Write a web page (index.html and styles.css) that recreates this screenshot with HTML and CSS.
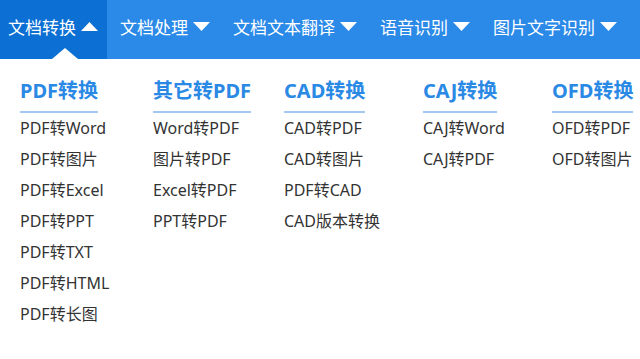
FILE: index.html
```html
<!DOCTYPE html>
<html lang="zh-CN">
<head>
    <meta charset="UTF-8">
    <meta name="viewport" content="width=device-width, initial-scale=1.0">
    <title>文档转换</title>
    <link rel="stylesheet" href="styles.css">
</head>
<body>
    <div class="nav">
        <div class="nav-item active">文档转换
            <svg class="caret" width="17" height="9" viewBox="0 0 17 9"><path d="M0 9 L8.5 0 L17 9 Z" fill="#fff"/></svg>
            <span class="pointer"></span>
        </div>
        <div class="nav-item">文档处理
            <svg class="caret" width="17" height="9" viewBox="0 0 17 9"><path d="M0 0 L17 0 L8.5 9 Z" fill="#fff"/></svg>
        </div>
        <div class="nav-item">文档文本翻译
            <svg class="caret" width="17" height="9" viewBox="0 0 17 9"><path d="M0 0 L17 0 L8.5 9 Z" fill="#fff"/></svg>
        </div>
        <div class="nav-item">语音识别
            <svg class="caret" width="17" height="9" viewBox="0 0 17 9"><path d="M0 0 L17 0 L8.5 9 Z" fill="#fff"/></svg>
        </div>
        <div class="nav-item">图片文字识别
            <svg class="caret" width="17" height="9" viewBox="0 0 17 9"><path d="M0 0 L17 0 L8.5 9 Z" fill="#fff"/></svg>
        </div>
    </div>

    <div class="menu">
        <div class="col col-1">
            <h3>PDF转换</h3>
            <ul>
                <li>PDF转Word</li>
                <li>PDF转图片</li>
                <li>PDF转Excel</li>
                <li>PDF转PPT</li>
                <li>PDF转TXT</li>
                <li>PDF转HTML</li>
                <li>PDF转长图</li>
            </ul>
        </div>
        <div class="col col-2">
            <h3>其它转PDF</h3>
            <ul>
                <li>Word转PDF</li>
                <li>图片转PDF</li>
                <li>Excel转PDF</li>
                <li>PPT转PDF</li>
            </ul>
        </div>
        <div class="col col-3">
            <h3>CAD转换</h3>
            <ul>
                <li>CAD转PDF</li>
                <li>CAD转图片</li>
                <li>PDF转CAD</li>
                <li>CAD版本转换</li>
            </ul>
        </div>
        <div class="col col-4">
            <h3>CAJ转换</h3>
            <ul>
                <li>CAJ转Word</li>
                <li>CAJ转PDF</li>
            </ul>
        </div>
        <div class="col col-5">
            <h3>OFD转换</h3>
            <ul>
                <li>OFD转PDF</li>
                <li>OFD转图片</li>
            </ul>
        </div>
    </div>
</body>
</html>
```

FILE: styles.css
```css
* {
    box-sizing: border-box;
    margin: 0;
    padding: 0;
}
body {
    font-family: "Noto Sans", "Noto Sans CJK SC", sans-serif;
    background-color: #ffffff;
    color: #333333;
    overflow: hidden;
}
.nav {
    display: flex;
    height: 59px;
    background-color: #2b8ae8;
    color: #ffffff;
    white-space: nowrap;
}
.nav-item {
    position: relative;
    display: flex;
    align-items: center;
    gap: 5px;
    height: 52px;
    padding: 0 10px 0 13px;
    font-size: 17px;
}
.nav-item.active {
    height: 59px;
    padding: 0 9px 0 8px;
    padding-bottom: 7px;
    background-color: #0b6fd3;
}
.caret {
    display: block;
    margin-top: 1px;
}
.pointer {
    position: absolute;
    left: 52px;
    bottom: 0;
    width: 0;
    height: 0;
    border-left: 13px solid transparent;
    border-right: 13px solid transparent;
    border-bottom: 11px solid #ffffff;
}
.menu {
    display: flex;
    padding: 17px 0 0 20px;
}
.col h3 {
    display: inline-block;
    font-size: 20px;
    font-weight: bold;
    line-height: 30px;
    padding-bottom: 5px;
    color: #2a89e4;
    border-bottom: 2px solid #a3c8f1;
    white-space: nowrap;
}
.col ul {
    list-style: none;
}
.col li {
    font-size: 16px;
    line-height: 31px;
    white-space: nowrap;
}
.col-1 { width: 133px; }
.col-2 { width: 131px; }
.col-3 { width: 139px; }
.col-4 { width: 129px; }
```
